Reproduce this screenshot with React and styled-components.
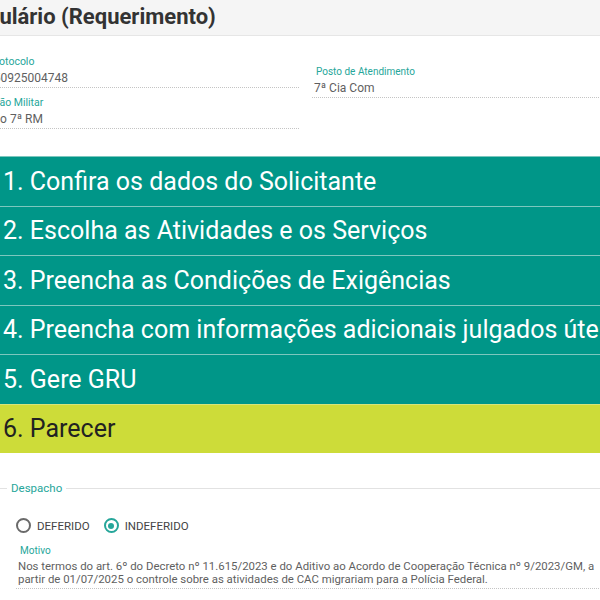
import React from "react";
import styled, { createGlobalStyle } from "styled-components";

const Global = createGlobalStyle`
  html, body { margin: 0; padding: 0; background: #fff; overflow: hidden; }
  body { font-family: Roboto, "Noto Sans", "Liberation Sans", sans-serif; width: 600px; }
  * { box-sizing: border-box; }
`;

const Page = styled.div`
  width: 600px;
  height: 600px;
  overflow: hidden;
  display: flex;
  flex-direction: column;
`;

const Header = styled.header`
  height: 36px;
  background: #f5f5f5;
  border-bottom: 1px solid #e6e6e6;
  display: flex;
  align-items: center;
  padding-bottom: 2px;
  flex-shrink: 0;
`;

const Title = styled.h1`
  margin: 0 0 0 -52px;
  font-size: 22px;
  font-weight: 700;
  color: #333;
  white-space: nowrap;
`;

const Form = styled.section`
  display: grid;
  grid-template-columns: 300px 1fr;
  column-gap: 12px;
  padding: 19px 0 27px 0;
  flex-shrink: 0;
`;

const Column = styled.div`
  display: flex;
  flex-direction: column;
  gap: 8px;
  margin-top: ${(p) => p.$top || 0}px;
`;

const Field = styled.div`
  display: flex;
  flex-direction: column;
  background-image: linear-gradient(to right, #c4c4c4 50%, rgba(255,255,255,0) 0%);
  background-size: 2px 1px;
  background-repeat: repeat-x;
  background-position: bottom left;
  padding-bottom: 2px;
`;

const Label = styled.label`
  font-size: ${(p) => p.$size || 10.5}px;
  line-height: 13px;
  color: #26a69a;
  white-space: nowrap;
  margin-left: ${(p) => p.$shift || 0}px;
`;

const Value = styled.div`
  font-size: 12px;
  line-height: 16px;
  padding-top: 2px;
  color: #5f5f5f;
  white-space: nowrap;
  margin-left: ${(p) => p.$shift || 0}px;
`;

const Steps = styled.div`
  display: flex;
  flex-direction: column;
  flex-shrink: 0;
`;

const Step = styled.div`
  height: 49.5px;
  display: flex;
  align-items: center;
  padding-left: 3px;
  font-size: 25px;
  color: ${(p) => (p.$active ? "#222" : "#fff")};
  background: ${(p) => (p.$active ? "#cddc39" : "#009688")};
  border-top: 1px solid ${(p) => (p.$active ? "#d8e47a" : "#7cc7be")};
  white-space: nowrap;
  overflow: hidden;
`;

const Fieldset = styled.fieldset`
  margin: 28px 0 0 0;
  padding: 12px 0 0 16px;
  border: none;
  border-top: 1px solid #e2e2e2;
  min-width: 0;
`;

const Legend = styled.legend`
  margin-left: -9px;
  padding: 0 4px 0 4px;
  font-size: 11.5px;
  color: #26a69a;
`;

const RadioGroup = styled.div`
  display: flex;
  align-items: center;
  gap: 14px;
  padding-top: 11px;
`;

const RadioOption = styled.label`
  display: flex;
  align-items: center;
  gap: 6px;
  font-size: 11.5px;
  color: #444;
`;

const RadioCircle = styled.span`
  width: 15px;
  height: 15px;
  border-radius: 50%;
  border: 2px solid ${(p) => (p.$checked ? "#26a69a" : "#6a6a6a")};
  display: flex;
  align-items: center;
  justify-content: center;
  &::after {
    content: "";
    width: 6px;
    height: 6px;
    border-radius: 50%;
    background: ${(p) => (p.$checked ? "#26a69a" : "transparent")};
  }
`;

const Motivo = styled.div`
  margin-top: 11px;
  padding-left: 2px;
  display: flex;
  flex-direction: column;
  background-image: linear-gradient(to right, #c4c4c4 50%, rgba(255,255,255,0) 0%);
  background-size: 2px 1px;
  background-repeat: repeat-x;
  background-position: bottom left;
  padding-bottom: 3px;
`;

const MotivoLabel = styled.span`
  font-size: 10px;
  line-height: 13px;
  color: #26a69a;
  padding-left: 2px;
`;

const MotivoText = styled.div`
  font-size: 11.4px;
  line-height: 13px;
  color: #5f5f5f;
  white-space: pre-line;
  padding-top: 3px;
`;

const steps = [
  "1. Confira os dados do Solicitante",
  "2. Escolha as Atividades e os Serviços",
  "3. Preencha as Condições de Exigências",
  "4. Preencha com informações adicionais julgados úteis",
  "5. Gere GRU",
  "6. Parecer",
];

export default function App() {
  return (
    <>
      <Global />
      <Page>
        <Header>
          <Title>Formulário (Requerimento)</Title>
        </Header>
        <Form>
          <Column>
            <Field>
              <Label $shift={-11}>Protocolo</Label>
              <Value $shift={-13}>250925004748</Value>
            </Field>
            <Field>
              <Label $shift={-21}>Região Militar</Label>
              <Value $shift={-25}>Cmdo 7ª RM</Value>
            </Field>
          </Column>
          <Column $top={10}>
            <Field>
              <Label $shift={4} $size={10}>Posto de Atendimento</Label>
              <Value $shift={2}>7ª Cia Com</Value>
            </Field>
          </Column>
        </Form>
        <Steps>
          {steps.map((s, i) => (
            <Step key={s} $active={i === 5}>
              {s}
            </Step>
          ))}
        </Steps>
        <Fieldset>
          <Legend>Despacho</Legend>
          <RadioGroup>
            <RadioOption>
              <RadioCircle />
              DEFERIDO
            </RadioOption>
            <RadioOption>
              <RadioCircle $checked />
              INDEFERIDO
            </RadioOption>
          </RadioGroup>
          <Motivo>
            <MotivoLabel>Motivo</MotivoLabel>
            <MotivoText>
              {"Nos termos do art. 6º do Decreto nº 11.615/2023 e do Aditivo ao Acordo de Cooperação Técnica nº 9/2023/GM, a\npartir de 01/07/2025 o controle sobre as atividades de CAC migrariam para a Polícia Federal."}
            </MotivoText>
          </Motivo>
        </Fieldset>
      </Page>
    </>
  );
}
